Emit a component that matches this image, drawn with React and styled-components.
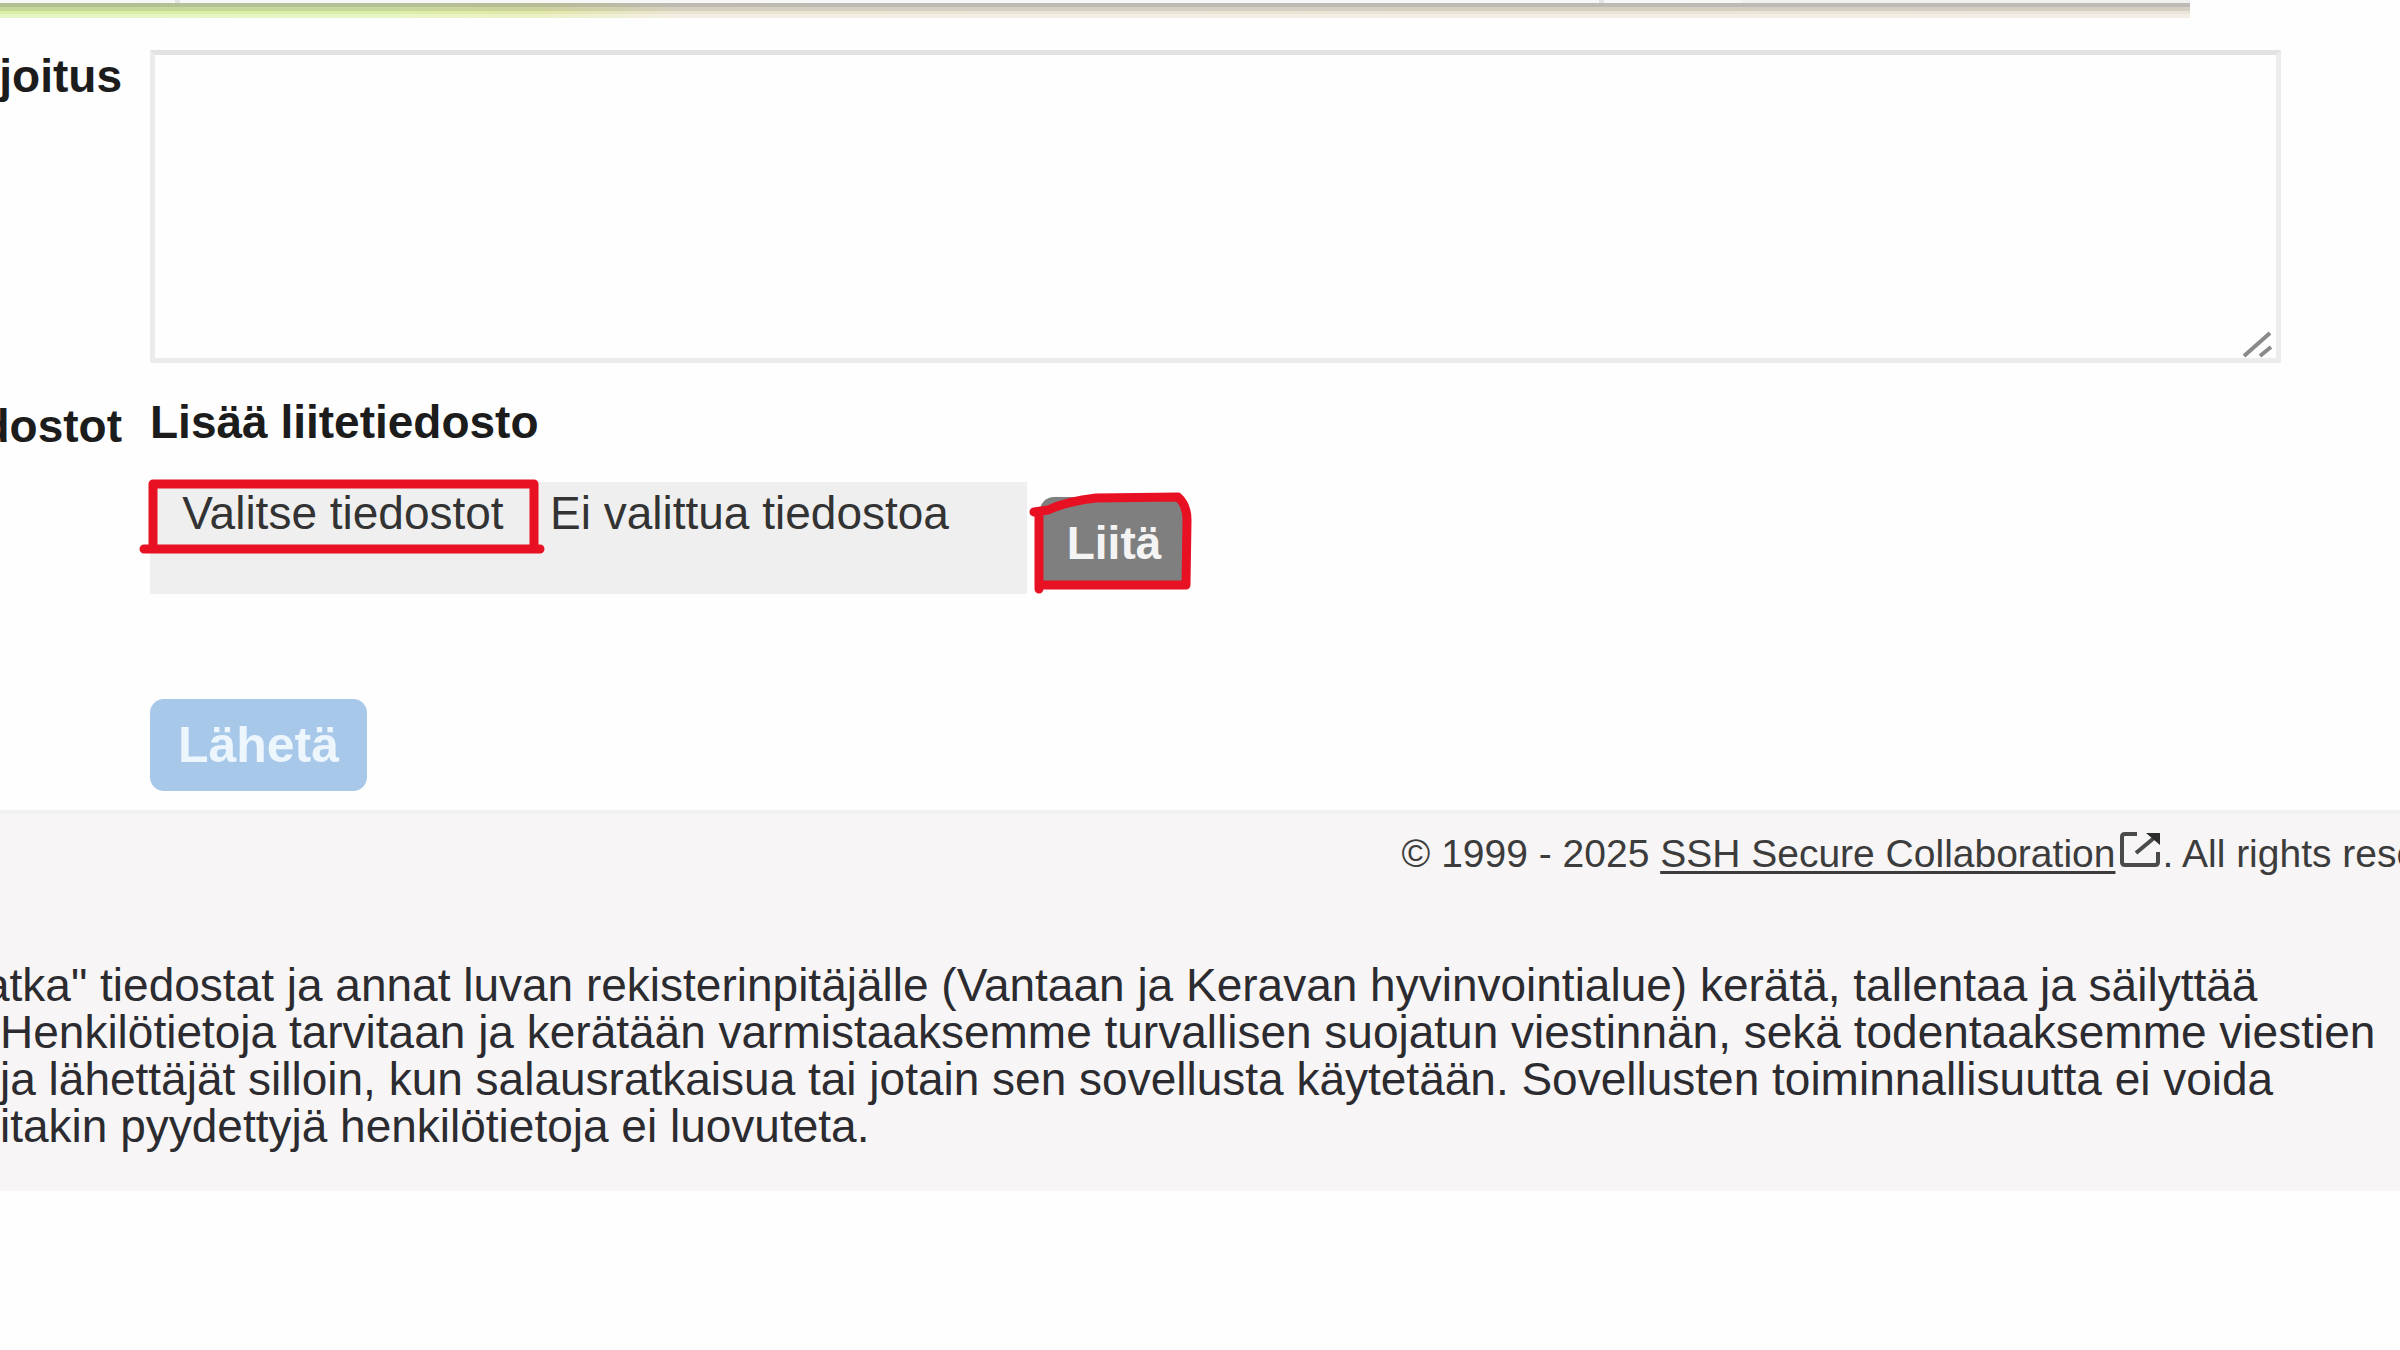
import React, {useState} from 'react';
import styled, {createGlobalStyle} from 'styled-components';

//-----< Styling >-----\\
const GlobalStyle = createGlobalStyle`
    * {
        box-sizing: border-box;
    }
    body {
        margin: 0;
        background: #fefefe;
        color: #1c1c1c;
        font-family: "Liberation Sans", Arial, sans-serif;
        font-size: 46px;
        line-height: 52px;
        overflow-x: hidden;
    }
`;

const TopStrip = styled.header`
    display: grid;
    grid-template-columns: 180px 1424px 137px 1fr;
    grid-template-rows: 3px 15px;
    margin-right: 210px;
`;

const Tab = styled.div`
    background: ${props => props.$dim ? '#f0f0f0' : '#f7f7f7'};
    border-right: ${props => props.$divided ? '5px solid #e4e4e4' : 'none'};
`;

const Rule = styled.div`
    grid-column: 1 / -1;
    background:
        linear-gradient(rgba(110, 110, 120, .36) 0 4px, rgba(110, 110, 100, .18) 4px 8px, transparent 8px 11px, rgba(255, 255, 255, .35) 11px),
        linear-gradient(90deg, #d8efa4 0, #dcefa8 400px, #e2e8a8 540px, #ebe5d4 680px, #ebe4d8 100%);
`;

const Form = styled.form`
    display: grid;
    grid-template-columns: 122px 1fr;
    column-gap: 28px;
    padding: 32px 119px 19px 0;
`;

const RowLabel = styled.label`
    display: flex;
    justify-content: flex-end;
    overflow: hidden;
    white-space: nowrap;
    font-weight: bold;
    padding-top: ${props => props.$lowered ? '37px' : '0'};
`;

const MessageBox = styled.div`
    position: relative;
    display: flex;
`;

const Message = styled.textarea`
    width: 100%;
    height: 313px;
    margin: 0;
    padding: 8px 16px;
    border: 5px solid #ececec;
    border-top-color: #e2e2e2;
    background: #fefefe;
    font: inherit;
    resize: none;
    outline: none;
`;

const Grip = styled.svg`
    position: absolute;
    right: 8px;
    bottom: 4px;
    width: 32px;
    height: 28px;
    pointer-events: none;
`;

const Attachments = styled.div`
    padding-top: 33px;
`;

const SectionTitle = styled.h2`
    margin: 0 0 34px;
    font-size: inherit;
    font-weight: bold;
`;

const AttachRow = styled.div`
    display: flex;
    align-items: flex-start;
    gap: 13px;
`;

const FilePicker = styled.div`
    position: relative;
    display: flex;
    width: 877px;
    height: 112px;
    padding-top: 5px;
    background: #efefef;
    color: #333;
    white-space: nowrap;
`;

const FileInput = styled.input`
    position: absolute;
    width: 1px;
    height: 1px;
    opacity: 0;
`;

const PickLabel = styled.label`
    width: 386px;
    text-align: center;
    cursor: pointer;
`;

const FileStatus = styled.span`
    padding-left: 14px;
`;

const AttachBox = styled.div`
    position: relative;
    padding-top: 15px;
`;

const Button = styled.button`
    display: block;
    width: ${props => props.$wide ? '217px' : '148px'};
    height: ${props => props.$wide ? '92px' : '91px'};
    padding: 0;
    border: none;
    border-radius: 14px;
    background: ${props => props.$wide ? '#a8c8ea' : '#7f7f7f'};
    color: ${props => props.$wide ? '#edf6fd' : '#f4f4f4'};
    font-family: inherit;
    font-size: ${props => props.$wide ? '50px' : '46px'};
    font-weight: bold;
    cursor: pointer;
`;

const PenMark = styled.svg`
    position: absolute;
    left: -12px;
    top: -8px;
    overflow: visible;
    fill: none;
    stroke: #e81123;
    stroke-width: 9;
    stroke-linecap: round;
    stroke-linejoin: round;
    pointer-events: none;
`;

const SendRow = styled.div`
    grid-column: 2;
    padding-top: 105px;
`;

const Footer = styled.footer`
    padding: 18px 0 41px;
    border-top: 4px solid #f2f2f2;
    background: #f7f5f6;
    overflow: hidden;
    white-space: nowrap;
`;

const Copyright = styled.div`
    display: flex;
    margin-left: 58.4%;
    font-size: 39px;
    line-height: 44px;
    color: #3c3c3c;
    white-space: pre;

    a {
        color: inherit;
        text-decoration: underline;
        text-decoration-thickness: 3px;
        text-underline-offset: 4px;
    }
    svg {
        flex: none;
        width: 43px;
        height: 36px;
        margin-left: 4px;
    }
`;

const Terms = styled.p`
    margin: 86px 0 0;
    line-height: 47px;
    color: #2b2b30;
    text-indent: -16px;
`;


//-----< Component Function >-----\\
export default function App(){

    const [message, setMessage] = useState('');
    const [fileName, setFileName] = useState('');

    function handleFiles(e) {
        setFileName(Array.from(e.target.files).map(file => file.name).join(', '));
    }

    return (
        <>
            <GlobalStyle />
            <TopStrip>
                <Tab $divided />
                <Tab $divided />
                <Tab />
                <Tab $dim />
                <Rule />
            </TopStrip>
            <Form onSubmit={e=>e.preventDefault()}>
                <RowLabel htmlFor="message">joitus</RowLabel>
                <MessageBox>
                    <Message
                        id="message"
                        value={message}
                        onChange={e=>setMessage(e.target.value)}
                    />
                    <Grip viewBox="0 0 32 28" fill="none" stroke="#8a8a8a" strokeWidth="4">
                        <path d="M3 25 L29 2 M19 25 L30 16" />
                    </Grip>
                </MessageBox>

                <RowLabel htmlFor="files" $lowered>dostot</RowLabel>
                <Attachments>
                    <SectionTitle>Lisää liitetiedosto</SectionTitle>
                    <AttachRow>
                        <FilePicker>
                            <FileInput id="files" type="file" multiple onChange={handleFiles} />
                            <PickLabel htmlFor="files">Valitse tiedostot</PickLabel>
                            <FileStatus>{fileName || 'Ei valittua tiedostoa'}</FileStatus>
                            {/* hand drawn frame round the file chooser */}
                            <PenMark width="410" height="84">
                                <path d="M15 70 V10 H396 V70 M6 75 H402" />
                            </PenMark>
                        </FilePicker>
                        <AttachBox>
                            <Button type="button">Liitä</Button>
                            {/* hand drawn frame round the attach button */}
                            <PenMark width="170" height="130">
                                <path d="M6 38 L20 36 Q40 27 68 24 L150 23 Q159 31 159 46 L158 111 H11 M11 115 V42" />
                            </PenMark>
                        </AttachBox>
                    </AttachRow>
                </Attachments>

                <SendRow>
                    <Button type="submit" $wide>Lähetä</Button>
                </SendRow>
            </Form>
            <Footer>
                <Copyright>
                    <span>© 1999 - 2025 </span>
                    <a href="#ssh">SSH Secure Collaboration</a>
                    <svg viewBox="0 0 43 36" fill="none" stroke="#4a4a4a" strokeWidth="4">
                        <path d="M18 2 H6 Q3 2 3 5 V30 Q3 33 6 33 H36 Q39 33 39 30 V20" />
                        <path d="M17 21 L35 6" />
                        <path d="M27 1 H41 V13 Z" fill="#2c2c2c" stroke="none" />
                    </svg>
                    <span>. All rights reserved.</span>
                </Copyright>
                <Terms>
                    atka" tiedostat ja annat luvan rekisterinpitäjälle (Vantaan ja Keravan hyvinvointialue) kerätä, tallentaa ja säilyttää<br />
                    Henkilötietoja tarvitaan ja kerätään varmistaaksemme turvallisen suojatun viestinnän, sekä todentaaksemme viestien<br />
                    ja lähettäjät silloin, kun salausratkaisua tai jotain sen sovellusta käytetään. Sovellusten toiminnallisuutta ei voida<br />
                    itakin pyydettyjä henkilötietoja ei luovuteta.
                </Terms>
            </Footer>
        </>
    )
}
